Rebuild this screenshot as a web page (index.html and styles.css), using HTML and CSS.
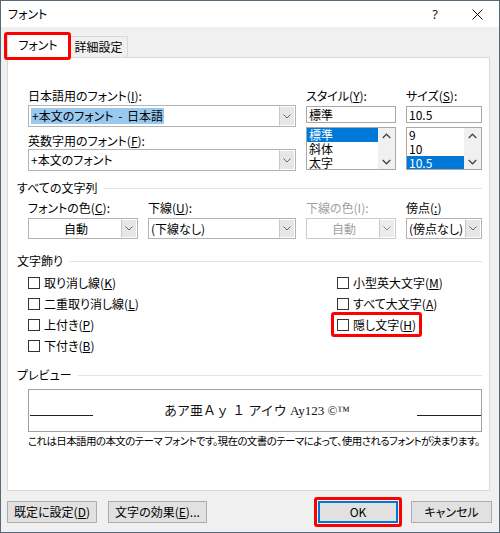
FILE: index.html
```html
<!DOCTYPE html>
<html lang="ja">
<head>
<meta charset="utf-8">
<title>フォント</title>
<link rel="stylesheet" href="styles.css">
</head>
<body>
<div class="window">
  <div class="titlebar">
    <span class="title">フォント</span>
    <span class="tb-help">?</span>
    <span class="tb-close"><svg width="11" height="11" viewBox="0 0 11 11"><path d="M0.5 0.5 L10.5 10.5 M10.5 0.5 L0.5 10.5" stroke="#111" stroke-width="1" fill="none"/></svg></span>
  </div>
  <div class="tabs">
    <div class="tab active">フォント</div>
    <div class="tab">詳細設定</div>
  </div>
  <div class="panel">
    <div class="fonts">
      <div class="col">
        <div class="lbl">日本語用のフォント(<u>I</u>):</div>
        <div class="combo tall"><div class="val"><span class="sel">+本文のフォント - 日本語</span></div><div class="dd"><svg width="8" height="5" viewBox="0 0 8 5"><path d="M0.5 0.5 L4 4 L7.5 0.5" fill="none" stroke="#666"/></svg></div></div>
        <div class="lbl lbl2">英数字用のフォント(<u>F</u>):</div>
        <div class="combo tall c2"><div class="val">+本文のフォント</div><div class="dd"><svg width="8" height="5" viewBox="0 0 8 5"><path d="M0.5 0.5 L4 4 L7.5 0.5" fill="none" stroke="#666"/></svg></div></div>
      </div>
      <div class="col">
        <div class="lbl">スタイル(<u>Y</u>):</div>
        <div class="textbox">標準</div>
        <div class="listbox">
          <div class="items">
            <div class="item selected">標準</div>
            <div class="item">斜体</div>
            <div class="item">太字</div>
          </div>
          <div class="sbar">
            <svg width="9" height="6" viewBox="0 0 9 6"><path d="M0.7 5 L4.5 1.2 L8.3 5" fill="none" stroke="#444" stroke-width="1.3"/></svg>
            <svg width="9" height="6" viewBox="0 0 9 6"><path d="M0.7 1 L4.5 4.8 L8.3 1" fill="none" stroke="#444" stroke-width="1.3"/></svg>
          </div>
        </div>
      </div>
      <div class="col">
        <div class="lbl">サイズ(<u>S</u>):</div>
        <div class="textbox">10.5</div>
        <div class="listbox">
          <div class="items">
            <div class="item">9</div>
            <div class="item">10</div>
            <div class="item selected">10.5</div>
          </div>
          <div class="sbar">
            <svg width="9" height="6" viewBox="0 0 9 6"><path d="M0.7 5 L4.5 1.2 L8.3 5" fill="none" stroke="#444" stroke-width="1.3"/></svg>
            <svg width="9" height="6" viewBox="0 0 9 6"><path d="M0.7 1 L4.5 4.8 L8.3 1" fill="none" stroke="#444" stroke-width="1.3"/></svg>
          </div>
        </div>
      </div>
    </div>

    <div class="section s1"><span>すべての文字列</span></div>
    <div class="row4">
      <div class="field">
        <div class="lbl">フォントの色(<u>C</u>):</div>
        <div class="combo"><div class="val center">自動</div><div class="dd"><svg width="8" height="5" viewBox="0 0 8 5"><path d="M0.5 0.5 L4 4 L7.5 0.5" fill="none" stroke="#666"/></svg></div></div>
      </div>
      <div class="field">
        <div class="lbl">下線(<u>U</u>):</div>
        <div class="combo"><div class="val">(下線なし)</div><div class="dd"><svg width="8" height="5" viewBox="0 0 8 5"><path d="M0.5 0.5 L4 4 L7.5 0.5" fill="none" stroke="#666"/></svg></div></div>
      </div>
      <div class="field">
        <div class="lbl disabled">下線の色(I):</div>
        <div class="combo off"><div class="val center">自動</div><div class="dd"><svg width="8" height="5" viewBox="0 0 8 5"><path d="M0.5 0.5 L4 4 L7.5 0.5" fill="none" stroke="#888"/></svg></div></div>
      </div>
      <div class="field">
        <div class="lbl">傍点(<u>:</u>)</div>
        <div class="combo"><div class="val">(傍点なし)</div><div class="dd"><svg width="8" height="5" viewBox="0 0 8 5"><path d="M0.5 0.5 L4 4 L7.5 0.5" fill="none" stroke="#666"/></svg></div></div>
      </div>
    </div>

    <div class="section s2"><span>文字飾り</span></div>
    <div class="effects">
      <div class="ecol">
        <div class="cb"><span class="box"></span><span>取り消し線(<u>K</u>)</span></div>
        <div class="cb"><span class="box"></span><span>二重取り消し線(<u>L</u>)</span></div>
        <div class="cb"><span class="box"></span><span>上付き(<u>P</u>)</span></div>
        <div class="cb"><span class="box"></span><span>下付き(<u>B</u>)</span></div>
      </div>
      <div class="ecol">
        <div class="cb"><span class="box"></span><span>小型英大文字(<u>M</u>)</span></div>
        <div class="cb"><span class="box"></span><span>すべて大文字(<u>A</u>)</span></div>
        <div class="cb mark"><span class="box"></span><span>隠し文字(<u>H</u>)</span></div>
      </div>
    </div>

    <div class="section s3"><span>プレビュー</span></div>
    <div class="preview">
      <span class="pv-line"></span>
      <span class="pv-text">あア亜Ａｙ １ アイウ Ay123 ©™</span>
      <span class="pv-line right"></span>
    </div>
    <p class="desc">これは日本語用の本文のテーマ フォントです。現在の文書のテーマによって、使用されるフォントが決まります。</p>
  </div>
  <div class="footer">
    <button class="btn b-default">既定に設定(<u>D</u>)</button>
    <button class="btn b-effects">文字の効果(<u>E</u>)...</button>
    <span class="spacer"></span>
    <button class="btn b-ok">OK</button>
    <button class="btn b-cancel">キャンセル</button>
  </div>
</div>
</body>
</html>
```

FILE: styles.css
```css
* { box-sizing: border-box; }
body {
  margin: 0;
  font-family: "Noto Sans CJK JP", "Noto Sans", sans-serif;
  font-size: 12px;
  color: #000;
  font-feature-settings: "palt";
  background: #fff;
}
u { text-decoration: underline; text-underline-offset: 1px; }

.window {
  width: 500px;
  height: 533px;
  border: 1px solid #56697a;
  background: #f0f0f0;
  display: flex;
  flex-direction: column;
}

.titlebar {
  height: 26px;
  background: #fff;
  display: flex;
  align-items: center;
}
.title { flex: 1; padding-left: 7px; line-height: 16px; }
.tb-help { width: 40px; text-align: center; font-size: 13px; color: #222; line-height: 16px; font-family: "Noto Sans", sans-serif; }
.tb-close { width: 44px; display: flex; justify-content: center; align-items: center; }

.tabs {
  height: 30px;
  display: flex;
  align-items: flex-end;
  padding-left: 6px;
}
.tab {
  height: 21px;
  width: 59px;
  border: 1px solid #d9d9d9;
  border-bottom: none;
  background: #f0f0f0;
  display: flex;
  align-items: center;
  justify-content: center;
  line-height: 16px;
}
.tab.active {
  position: relative;
  z-index: 1;
  width: 62px;
  height: 25px;
  margin-bottom: -1px;
  background: #fff;
  padding-bottom: 2px;
}
.tab.active::after {
  content: "";
  position: absolute;
  top: -2px; left: -4px; right: -3px; bottom: -2px;
  border: 3px solid #f00;
  border-radius: 3px;
}

.panel {
  margin: 0 9px 0 6px;
  height: 434px;
  background: #fff;
  border: 1px solid #d9d9d9;
  padding: 30px 7px 0 20px;
}

.lbl { line-height: 16px; height: 16px; white-space: nowrap; }
.lbl.disabled { color: #a0a0a0; }

.fonts {
  display: grid;
  grid-template-columns: 268px 90px 76px;
  column-gap: 10px;
}
.col { display: flex; flex-direction: column; }
.lbl2 { margin-top: 6px; }

.combo {
  display: flex;
  height: 21px;
  margin-top: 2px;
  border: 1px solid #b4b4b4;
  background: #fff;
}
.combo.tall { height: 22px; margin-top: 1px; }
.combo.c2 { margin-top: 0; }
.combo .val {
  flex: 1;
  display: flex;
  align-items: center;
  padding-left: 2px;
  line-height: 16px;
  white-space: nowrap;
  overflow: hidden;
}
.combo .val.center { justify-content: center; }
.combo .sel { background: #99c9ef; padding: 0 1px; word-spacing: 2px; }
.combo .dd {
  width: 16px;
  background: #e6e6e6;
  border: 1px solid #fff;
  border-left: 1px solid #c8c8c8;
  display: flex;
  align-items: center;
  justify-content: center;
}
.combo.off { border-color: #cccccc; }
.combo.off .val { color: #a0a0a0; }
.combo.off .dd { background: #ececec; }

.textbox {
  margin-top: 2px;
  height: 17px;
  border: 1px solid #a8a8a8;
  padding-left: 2px;
  line-height: 15px;
  background: #fff;
}
.listbox {
  margin-top: 4px;
  height: 43px;
  border: 1px solid #a8a8a8;
  display: flex;
  overflow: hidden;
}
.items { flex: 1; }
.item { height: 14px; line-height: 14px; padding-left: 2px; }
.item.selected { background: #0078d7; color: #fff; }
.sbar {
  width: 17px;
  background: #f0f0f0;
  display: flex;
  flex-direction: column;
  align-items: center;
  justify-content: space-between;
  padding: 5px 0 4px;
}

.section {
  display: flex;
  align-items: center;
  gap: 6px;
  margin-left: -11px;
  height: 16px;
  line-height: 16px;
}
.section::after {
  content: "";
  flex: 1;
  height: 1px;
  background: #e3e3e3;
}
.s1 { margin-top: 9px; }
.s2 { margin-top: 14px; }
.s3 { margin-top: 11px; }

.row4 {
  margin-top: 4px;
  display: grid;
  grid-template-columns: 110px 148px 90px 76px;
  column-gap: 10px;
}
.field { display: flex; flex-direction: column; }

.effects {
  margin-top: 3px;
  display: grid;
  grid-template-columns: 309px 1fr;
}
.ecol { display: flex; flex-direction: column; align-items: flex-start; }
.cb {
  height: 21px;
  display: inline-flex;
  align-items: center;
  gap: 4px;
  line-height: 16px;
  white-space: nowrap;
}
.box {
  width: 12px;
  height: 12px;
  border: 1px solid #333;
  background: #fff;
}
.cb.mark { position: relative; }
.cb.mark::after {
  content: "";
  position: absolute;
  top: -2px; bottom: -2px; left: -6px; right: -6px;
  border: 3px solid #f00;
  border-radius: 3px;
}

.preview {
  margin-top: 6px;
  height: 43px;
  border: 1px solid #a0a0a0;
  display: flex;
  align-items: center;
  padding-left: 1px;
}
.pv-line {
  align-self: flex-end;
  margin-bottom: 15px;
  width: 63px;
  height: 1px;
  background: #222;
}
.pv-line.right { width: 64px; }
.pv-text {
  flex: 1;
  text-align: center;
  font-family: "Liberation Serif", "Noto Sans CJK JP", serif;
  font-size: 13px;
  line-height: 18px;
  font-feature-settings: normal;
  color: #111;
  padding-left: 4px;
}
.desc {
  margin: 2px 0 0;
  font-size: 10.5px;
  letter-spacing: -0.6px;
  line-height: 14px;
  white-space: nowrap;
}

.footer {
  flex: 1;
  display: flex;
  align-items: flex-start;
  padding: 10px 7px 0 6px;
}
.spacer { flex: 1; }
.btn {
  height: 22px;
  background: #e1e1e1;
  border: 1px solid #adadad;
  font-family: inherit;
  font-size: 12px;
  line-height: 16px;
  color: #000;
  padding: 0;
  font-feature-settings: "palt";
}
.b-default { width: 90px; margin-right: 11px; }
.b-effects { width: 99px; }
.b-ok {
  width: 80px;
  margin-right: 13px;
  border-color: #0078d7;
  box-shadow: inset 0 0 0 1px #0078d7;
  position: relative;
}
.b-ok::after {
  content: "";
  position: absolute;
  top: -5px; bottom: -5px; left: -5px; right: -5px;
  border: 3px solid #f00;
  border-radius: 3px;
}
.b-cancel { width: 81px; }
```
